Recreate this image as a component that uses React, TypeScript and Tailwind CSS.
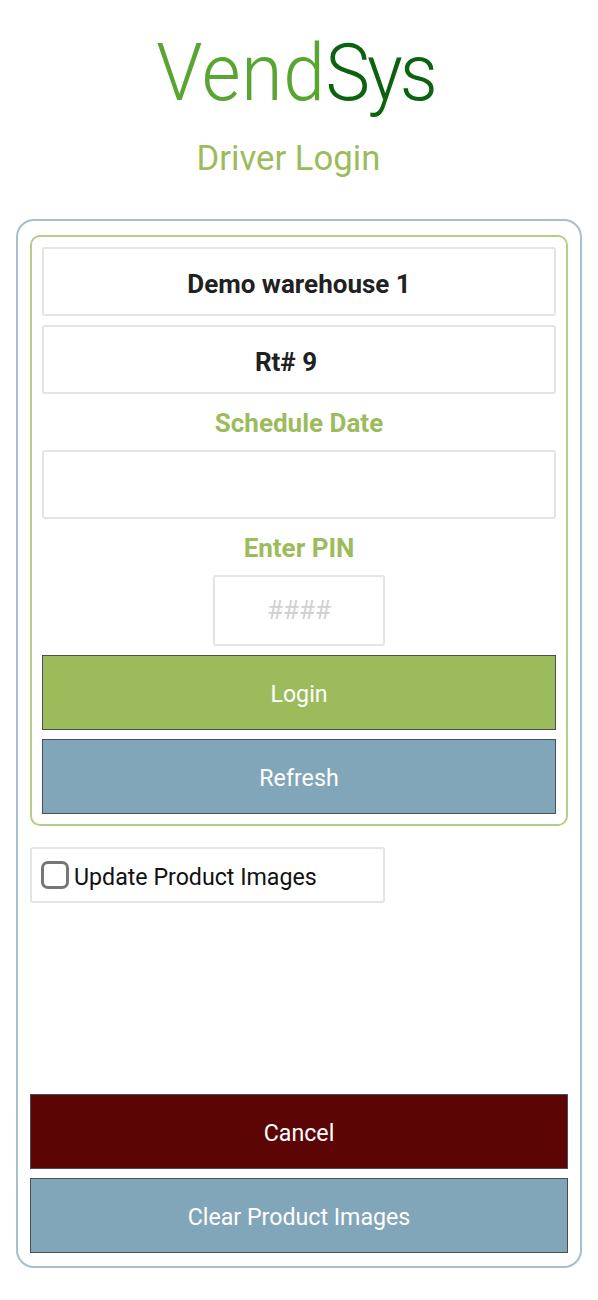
const field = "flex h-[69px] w-full items-center justify-center rounded-[3px] border-2 border-[#e4e4e4] bg-white pt-[5px] text-[26px] font-bold text-[#212121]";
const label = "flex h-[56px] items-center justify-center pt-[3px] text-[26px] font-bold text-[#9cbc5c]";
const button = "flex h-[75px] w-full items-center justify-center border border-[#4a4f55] pt-[3px] text-[23.2px] text-white";

export default function App() {
  return (
    <main className="min-h-[1300px] bg-white font-['Roboto',sans-serif]">
      <header className="flex h-[219px] flex-col items-center">
        <h1 className="mr-[7px] mt-[26px] h-[92px] scale-y-[1.07] text-[75px] font-light leading-[92px] tracking-[0.75px] text-[#58a532]">
          Vend<span className="tracking-[-3px] text-[#0c620e]">Sys</span>
        </h1>
        <h2 className="mr-[21px] mt-[17px] text-[34.7px] leading-[46px] text-[#9cbc5c]">Driver Login</h2>
      </header>

      <section className="mx-4 flex h-[1049px] flex-col rounded-[18px] border-2 border-[#a5bfcc] px-[12px] pb-[13px] pt-[14px]">
        <div className="flex flex-col rounded-[10px] border-2 border-[#b7cd85] px-[10px] pb-[10px] pt-[10px]">
          <div className={field}>Demo warehouse 1</div>
          <div className={`${field} mt-[9px] pr-[26px]`}>Rt# 9</div>
          <div className={label}>Schedule Date</div>
          <div className={field} />
          <div className={label}>Enter PIN</div>
          <div className="flex h-[71px] w-[172px] items-center justify-center self-center rounded-[3px] border-2 border-[#e4e4e4] text-[26px] text-[#d0d0d0]">
            ####
          </div>
          <button className={`${button} mt-[9px] bg-[#9cbc5c]`}>Login</button>
          <button className={`${button} mt-[9px] bg-[#82a6b9]`}>Refresh</button>
        </div>

        <label className="mt-[21px] flex h-[56px] w-[355px] items-center rounded-[3px] border-2 border-[#e4e4e4] pl-[9px] text-[23.2px] text-[#111111]">
          <span className="mr-[5px] h-[28px] w-[28px] shrink-0 rounded-[7px] border-[3.5px] border-[#767676] bg-white" />
          <span className="pt-[4px]">Update Product Images</span>
        </label>

        <div className="mt-auto flex flex-col gap-[9px]">
          <button className={`${button} bg-[#5c0505]`}>Cancel</button>
          <button className={`${button} bg-[#82a6b9]`}>Clear Product Images</button>
        </div>
      </section>
    </main>
  );
}
